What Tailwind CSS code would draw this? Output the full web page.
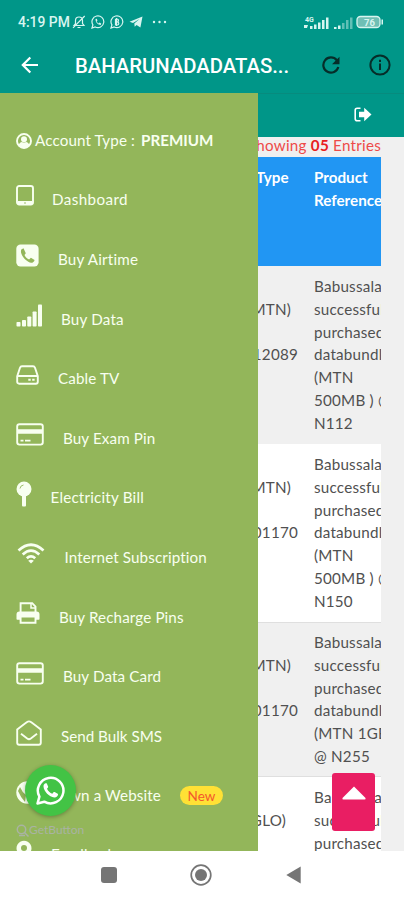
<!DOCTYPE html>
<html lang="en">
<head>
<meta charset="utf-8">
<meta name="viewport" content="width=device-width, initial-scale=1">
<title>BAHARUNADADATASUB</title>
<script src="https://cdn.jsdelivr.net/npm/@tailwindcss/browser@4"></script>
</head>
<body class="bg-white">
<div class="relative flex h-[900px] w-[404px] flex-col overflow-hidden bg-white font-[Lato,sans-serif] text-[15.2px] leading-[22.8px]">

  <!-- Status bar and title bar -->
  <header class="h-[93px] shrink-0 bg-[#009688] font-[Roboto,sans-serif] text-white">
    <div class="flex h-[44px] items-center pl-[18px] pr-[20px] text-[#d8f5f0]">
      <span class="w-[54px] whitespace-nowrap text-[13.9px] font-medium">4:19 PM</span>
      <svg class="h-[14px] w-[14px]" viewBox="0 0 14 14" fill="none" stroke="currentColor" stroke-width="1.2"><path d="M2 10.5h10L10.5 8.5V5.5a3.5 3.5 0 0 0-7 0v3zM5.5 12.5h3M12.7 1 1 12.8"/></svg>
      <svg class="ml-[5px] h-[14px] w-[14px]" viewBox="0 0 14 14" fill="none" stroke="currentColor" stroke-width="1.2"><path d="M1 13l.9-3.1A5.9 5.9 0 1 1 4.2 12z"/><path d="M4.5 4c0 3.5 2.5 5.8 5.3 6l.4-1.6-1.7-.8-.8.8C6.6 7.8 6 7.1 5.7 6.2l.8-.8-.7-1.7z" fill="currentColor" stroke="none"/></svg>
      <svg class="ml-[5px] h-[14px] w-[14px]" viewBox="0 0 14 14" fill="none" stroke="currentColor" stroke-width="1.2"><path d="M1 13l.9-3.1A5.9 5.9 0 1 1 4.2 12z"/><path d="M5.500 4v6h1.800a1.500 1.500 0 0 0 0-3H5.500M5.500 4H7a1.500 1.500 0 0 1 0 3M6.600 3v8"/></svg>
      <svg class="ml-[5px] h-[14px] w-[14px]" viewBox="0 0 14 14" fill="currentColor"><path d="M.5 6.800 13.500 1.500 11.400 12.500 7.600 9.900 5.700 11.800 5.300 8.400 10.500 4 4 7.900z"/></svg>
      <svg class="ml-[9px] h-[4px] w-[15px]" viewBox="0 0 15 4" fill="currentColor"><circle cx="2" cy="2" r="1.2"/><circle cx="7.500" cy="2" r="1.2"/><circle cx="13" cy="2" r="1.2"/></svg>
      <svg class="ml-auto h-[15px] w-[27px]" viewBox="0 0 27 15" fill="currentColor"><text x="2" y="7" font-size="7" font-weight="700" font-family="Roboto">4G</text><path d="M1 10h4l-1 3H1zM7 11h2.500v3H7zM11 9.500h2.500V14H11zM15 7.500h2.500V14H15zM19 5h2.500v9H19zM23 2.500h2.500V14H23z"/></svg>
      <svg class="ml-[2px] h-[15px] w-[21px]" viewBox="0 0 21 15" fill="currentColor"><path d="M2 12h2.500v2H2zM6 10.500h2.500V14H6z"/><path opacity=".45" d="M10 8h2.500v6H10zM14 5h2.500v9H14zM18 2.500h2.500V14H18z"/></svg>
      <svg class="ml-[3px] h-[14px] w-[28px]" viewBox="0 0 28 14"><rect x="1" y="1.500" width="23" height="11" rx="3.500" fill="#6fbfb5" stroke="currentColor" stroke-width="1.300"/><path d="M25.500 4.500H27v5h-1.500z" fill="currentColor"/><text x="8" y="10.500" font-size="9.500" font-weight="700" font-family="Roboto" fill="currentColor">76</text></svg>
    </div>
    <div class="flex h-[42px] items-center pl-[21px] pr-[13px]">
      <svg class="h-[18px] w-[18px]" viewBox="0 0 18 18" fill="none" stroke="currentColor" stroke-width="2.2"><path d="M17 9H2M9.300 1.500 1.800 9l7.500 7.500"/></svg>
      <h1 class="ml-[36px] w-[216px] whitespace-nowrap pt-[2px] text-[20.3px] font-medium">BAHARUNADADATAS...</h1>
      <svg class="ml-[31px] h-[18px] w-[18px]" viewBox="0 0 18 18" fill="none" stroke="#062d29" stroke-width="2.2"><path d="M14.800 4.200A7.600 7.600 0 1 0 16.300 11"/><path d="M17.500.8v7.500H10z" fill="#062d29" stroke="none"/></svg>
      <svg class="ml-auto h-[22px] w-[22px]" viewBox="0 0 22 22" fill="none" stroke="#062d29" stroke-width="2"><circle cx="11" cy="11" r="9.600"/><path d="M11 9.500v6.500M11 5.800v2.200"/></svg>
    </div>
  </header>

  <div class="flex h-[758px] shrink-0 overflow-hidden">
    <!-- Drawer -->
    <nav class="relative h-full w-[258px] shrink-0 overflow-hidden whitespace-nowrap bg-[#93b65a] pl-4 pt-[17.400px] tracking-[0.12px] text-[#f8fff0]">
      <div class="flex h-[59.600px] items-center pt-px">
        <svg class="h-[16px] w-[16px]" viewBox="0 0 16 16"><circle cx="8" cy="8" r="7" fill="none" stroke="currentColor" stroke-width="1.900"/><circle cx="8" cy="6.200" r="3" fill="currentColor"/><path d="M2.500 12.500c.6-2.300 2-3.600 3.500-3.600 1.300.8 2.700.8 4 0 1.500 0 2.900 1.300 3.500 3.600A7 7 0 0 1 8 15.200a7 7 0 0 1-5.500-2.700z" fill="currentColor"/></svg>
        <span class="ml-[3px]">Account Type :</span><b class="ml-[6px] tracking-normal">PREMIUM</b>
      </div>
      <div class="flex h-[59.600px] items-center">
        <svg class="mb-[8px] h-[21px] w-[18px]" viewBox="0 0 18 21" fill="none" stroke="currentColor"><rect x="1" y="1" width="16" height="18.500" rx="2.200" stroke-width="1.900"/><path d="M2 17.500h14" stroke-width="3"/><circle cx="9" cy="18" r=".8" fill="#93b65a" stroke="none"/></svg>
        <span class="ml-[18px] tracking-[0.4px]">Dashboard</span>
      </div>
      <div class="flex h-[59.600px] items-center">
        <svg class="mb-[7px] h-[23px] w-[23px]" viewBox="0 0 23 23"><rect x=".3" y=".5" width="22.300" height="22" rx="4.200" fill="currentColor"/><path d="M7.500 4.300 5.300 5.500C3.300 10 10 18.200 15.200 18.700c1.600 0 3-.9 3.400-2.800l-3.700-2.100-1.800 1.700c-2-.8-3.700-2.500-4.600-4.600l1.300-1.600z" fill="#93b65a"/></svg>
        <span class="ml-[19px] tracking-[0.2px]">Buy Airtime</span>
      </div>
      <div class="flex h-[59.600px] items-center">
        <svg class="mb-[7px] h-[23px] w-[27px]" viewBox="0 0 27 23" fill="currentColor"><rect x=".5" y="18" width="4" height="4.500" rx=".8"/><rect x="6" y="16" width="4" height="6.500" rx=".8"/><rect x="11.300" y="12.500" width="4" height="10" rx=".8"/><rect x="16.600" y="7.500" width="4" height="15" rx=".8"/><rect x="22" y=".5" width="4" height="22" rx=".8"/></svg>
        <span class="ml-[18px] tracking-[0.2px]">Buy Data</span>
      </div>
      <div class="flex h-[59.600px] items-center">
        <svg class="mb-[7px] h-[20px] w-[23px]" viewBox="0 0 23 20" fill="none" stroke="currentColor" stroke-width="1.900"><path d="M1.200 11.200 4 2.700Q4.500 1.200 6 1.200h11q1.500 0 2 1.500l2.800 8.500v5.500q0 2-2 2H3.200q-2 0-2-2zM1.200 11h20.600"/><path d="M12.300 14.800h2.400M16.200 14.800h2.400" stroke-width="2"/></svg>
        <span class="ml-[19px]">Cable TV</span>
      </div>
      <div class="flex h-[59.600px] items-center">
        <svg class="mb-[7px] h-[23px] w-[28px]" viewBox="0 0 28 23" fill="none" stroke="currentColor" stroke-width="1.900"><rect x="1.200" y="1.300" width="25.600" height="20.300" rx="2.300"/><path d="M1 8.500h26" stroke-width="4.500"/><path d="M4.500 17.700h3M9 17.700h5.500" stroke-width="1.700"/></svg>
        <span class="ml-[19px]">Buy Exam Pin</span>
      </div>
      <div class="flex h-[59.600px] items-center">
        <svg class="mb-[7px] h-[26px] w-[16px]" viewBox="0 0 16 26"><circle cx="8" cy="8" r="7.500" fill="currentColor"/><path d="M6 14.500h4v10q0 1-1 1H7q-1 0-1-1z" fill="currentColor"/><path d="M4 7.500Q4.300 4.500 7.500 4" fill="none" stroke="#93b65a" stroke-width=".9"/></svg>
        <span class="ml-[18.500px] tracking-[0.2px]">Electricity Bill</span>
      </div>
      <div class="flex h-[59.600px] items-center">
        <svg class="mb-[8px] ml-[1px] h-[21px] w-[28px]" viewBox="0 0 28 21" fill="none" stroke="currentColor" stroke-width="2.700"><path d="M1.500 7.500q12.500-11.500 25 0M5.700 11.500q8.300-7.700 16.600 0M9.800 15.200q4.200-3.800 8.400 0"/><path d="M11.200 17.700q2.800-2.100 5.600 0L14 20.500z" fill="currentColor" stroke="none"/></svg>
        <span class="ml-[19.500px]">Internet Subscription</span>
      </div>
      <div class="flex h-[59.600px] items-center">
        <svg class="mb-[7px] h-[22px] w-[24px]" viewBox="0 0 24 22"><path d="M4.600 11V1.200h11.600l3.300 3.400V11" fill="none" stroke="currentColor" stroke-width="1.900"/><path d="M15 1v5h4.500" fill="none" stroke="currentColor" stroke-width="1.500"/><path d="M.5 12.500q0-3 3-3h17q3 0 3 3V17q0 .8-.8.800H1.300q-.8 0-.8-.8z" fill="currentColor"/><path d="M4.600 14.500h14.900v6.300H4.600z" fill="#93b65a" stroke="currentColor" stroke-width="1.900"/></svg>
        <span class="ml-[19px]">Buy Recharge Pins</span>
      </div>
      <div class="flex h-[59.600px] items-center">
        <svg class="mb-[7px] h-[23px] w-[28px]" viewBox="0 0 28 23" fill="none" stroke="currentColor" stroke-width="1.900"><rect x="1.200" y="1.300" width="25.600" height="20.300" rx="2.300"/><path d="M1 8.500h26" stroke-width="4.500"/><path d="M4.500 17.700h3M9 17.700h5.500" stroke-width="1.700"/></svg>
        <span class="ml-[19px]">Buy Data Card</span>
      </div>
      <div class="flex h-[59.600px] items-center">
        <svg class="mb-[7px] h-[26px] w-[26px]" viewBox="0 0 26 26" fill="none" stroke="currentColor" stroke-width="1.900"><path d="M1.200 9.500q5-4 9.500-7.300 2.300-1.700 4.600 0 4.500 3.300 9.500 7.300v13.300q0 2-2 2H3.200q-2 0-2-2z"/><path d="m5 13.800 6.200 4.800q1.800 1.300 3.600 0L21 13.800"/></svg>
        <span class="ml-[19px] tracking-normal">Send Bulk SMS</span>
      </div>
      <div class="flex h-[59.600px] items-center">
        <svg class="mb-[7px] h-[23px] w-[23px]" viewBox="0 0 23 23"><circle cx="11.500" cy="11.500" r="11.200" fill="currentColor"/><path d="M4 6q2 5 6 8l-1 7q-4-4-7-11z" fill="#93b65a"/></svg>
        <span class="w-[122px] text-right">Own a Website</span>
        <span class="ml-[19px] h-[19px] w-[43px] rounded-full bg-[#ffe135] text-center text-[13.500px] leading-[20px] text-[#f4582c]">New</span>
      </div>
      <div class="flex h-[59.600px] items-start pt-[14px]">
        <svg class="h-[26px] w-[16px]" viewBox="0 0 16 26"><path d="M8 25 1.500 12A7.500 7.500 0 1 1 14.500 12z" fill="currentColor"/><circle cx="8" cy="8" r="3" fill="#93b65a"/></svg>
        <span class="ml-[19px] mt-[3px]">Feedback</span>
      </div>

      <!-- Floating chat button with its caption -->
      <div class="absolute left-[16px] top-[728px] flex items-center text-[12px] leading-[18px] tracking-normal text-[#a9b3a3]">
        <svg class="h-[13px] w-[13px]" viewBox="0 0 13 13" fill="none" stroke="currentColor" stroke-width="1.500"><circle cx="5.500" cy="5.500" r="4.200"/><path d="m8.500 8.500 4 4M3 11.500h6"/></svg>
        <span>GetButton</span>
      </div>
      <div class="absolute left-[25px] top-[672px] flex h-[51px] w-[51px] items-center justify-center rounded-full bg-[#43c345] shadow-[0_1px_4px_rgba(0,0,0,0.3)]">
        <svg class="h-[29px] w-[29px]" viewBox="0 0 29 29"><path d="M1.500 27.500 3.400 20.700A12.800 12.800 0 1 1 8.300 25.700z" fill="none" stroke="#fff" stroke-width="2.500" stroke-linejoin="round"/><path d="M9.500 7.300c-1.300.5-2 1.700-2 3.100.4 5.100 5.700 10.300 10.800 11 2 .1 3.700-1.100 3.800-3.500l-3.500-1.900c-.5-.2-.8-.1-1.100.3l-1.200 1.400c-2.300-.8-4.200-2.500-5.300-4.900l1-1.300c.2-.3.200-.6.100-.9l-1.300-3c-.2-.4-.7-.5-1.300-.3z" fill="#fff"/></svg>
      </div>
    </nav>

    <!-- Transactions page -->
    <main class="h-full w-[146px] shrink-0 overflow-hidden bg-[#f0f0f0] text-[#505050]">
      <div class="flex h-[44px] items-start border-t border-[#078b7e] bg-[#009688] pl-[96px] pt-[13px]">
        <svg class="h-[15px] w-[18px]" viewBox="0 0 18 15"><path d="M6.500 1.200H3.200Q1.200 1.200 1.200 3.200v8.600q0 2 2 2h3.300" fill="none" stroke="#fff" stroke-width="1.600"/><path d="M5 4.700h5.200V.8L17.500 7.500 10.200 14.200V10.300H5z" fill="#fff"/></svg>
      </div>
      <div class="flex h-[20px] w-[123px] items-center justify-end overflow-hidden whitespace-nowrap leading-[18px] tracking-[0.25px] text-[#ee4a48]"><span class="mb-[4px]">Showing <b class="text-[#e82020]">05</b> Entries</span></div>
      <div class="w-[123px] overflow-hidden whitespace-nowrap tracking-[0.22px]">
        <div class="flex h-[109px] bg-[#2196f3] pt-[9px] font-bold tracking-normal text-white">
          <div class="-ml-[2px] w-[58px] shrink-0">Type</div>
          <div>Product<br>Reference</div>
        </div>
        <div class="flex h-[178px] pt-[9px]">
          <div class="flex w-[40px] shrink-0 flex-col items-end pt-[22.800px]"><span class="mr-[7px]">(MTN)</span><span class="mt-[22.800px]">12089</span></div>
          <div class="ml-[16px]">Babussalam<br>successfully<br>purchased<br>databundle<br>(MTN<br>500MB ) @<br>N112</div>
        </div>
        <div class="flex h-[178px] bg-white pt-[9px]">
          <div class="flex w-[40px] shrink-0 flex-col items-end pt-[22.800px]"><span class="mr-[7px]">(MTN)</span><span class="mt-[22.800px]">01170</span></div>
          <div class="ml-[16px]">Babussalam<br>successfully<br>purchased<br>databundle<br>(MTN<br>500MB ) @<br>N150</div>
        </div>
        <div class="flex h-[155px] border-y border-[#dfdfdf] pt-[8px]">
          <div class="flex w-[40px] shrink-0 flex-col items-end pt-[22.800px]"><span class="mr-[7px]">(MTN)</span><span class="mt-[22.800px]">01170</span></div>
          <div class="ml-[16px]">Babussalam<br>successfully<br>purchased<br>databundle<br>(MTN 1GB )<br>@ N255</div>
        </div>
        <div class="flex h-[178px] bg-white pt-[9px]">
          <div class="flex w-[40px] shrink-0 flex-col items-end pt-[22.800px]"><span class="mr-[12px]">(GLO)</span></div>
          <div class="ml-[16px]">Babussalam<br>successfully<br>purchased<br>databundle</div>
        </div>
      </div>
    </main>
  </div>

  <!-- System navigation -->
  <footer class="flex h-[48px] items-center bg-white pl-[101px] text-[#757575]">
    <span class="h-[16px] w-[16px] rounded-[3px] bg-[#757575]"></span>
    <svg class="ml-[73px] h-[22px] w-[22px]" viewBox="0 0 22 22"><circle cx="11" cy="11" r="9.800" fill="none" stroke="currentColor" stroke-width="1.700"/><circle cx="11" cy="11" r="6" fill="currentColor"/></svg>
    <svg class="ml-[74px] h-[18px] w-[15px]" viewBox="0 0 15 18" fill="currentColor"><path d="M14.700.5v17L.3 9z"/></svg>
  </footer>

  <!-- Back to top -->
  <button class="absolute left-[332px] top-[773px] flex h-[58px] w-[43px] justify-center rounded-[3px] bg-[#e91e63] pt-[13px]">
    <svg class="h-[14px] w-[24px]" viewBox="0 0 24 14" fill="#fff"><path d="M12 .5 23.500 12q.5 1.500-1 1.500h-21Q0 13.500.5 12z"/></svg>
  </button>
</div>
</body>
</html>
